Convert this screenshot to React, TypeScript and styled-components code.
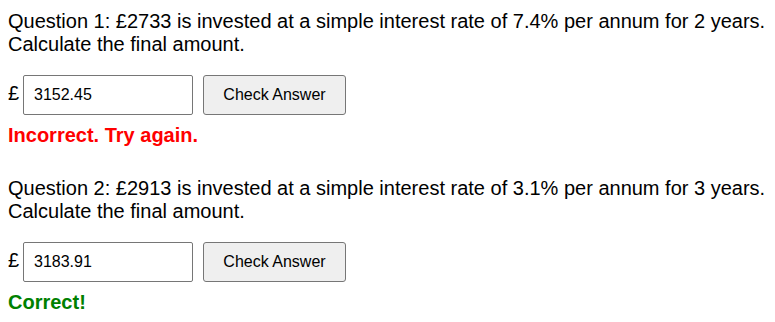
import styled, { createGlobalStyle } from "styled-components";

interface Question {
  id: number;
  principal: number;
  rate: number;
  years: number;
  answer: string;
  correct: boolean;
}

const questions: Question[] = [
  { id: 1, principal: 2733, rate: 7.4, years: 2, answer: "3152.45", correct: false },
  { id: 2, principal: 2913, rate: 3.1, years: 3, answer: "3183.91", correct: true },
];

const GlobalStyle = createGlobalStyle`
  body {
    margin: 0;
    background: #ffffff;
    font-family: "Liberation Sans", Arial, sans-serif;
    color: #000000;
  }
`;

const Page = styled.div`
  display: flex;
  flex-direction: column;
  gap: 30px;
  padding: 10px 8px 0;
`;

const Block = styled.div`
  display: flex;
  flex-direction: column;
`;

const Prompt = styled.div`
  font-size: 20px;
  line-height: 23px;
`;

const AnswerRow = styled.div`
  display: flex;
  align-items: baseline;
  margin-top: 19px;
  font-size: 20px;
`;

const Pound = styled.span`
  width: 15px;
`;

const Input = styled.input`
  box-sizing: border-box;
  width: 170px;
  height: 40px;
  padding: 10px;
  border: 1px solid #767676;
  border-radius: 2px;
  font-family: "Liberation Sans", Arial, sans-serif;
  font-size: 16px;
  color: #000000;
  background: #ffffff;
  outline: none;
`;

const CheckButton = styled.button`
  box-sizing: border-box;
  width: 143px;
  height: 40px;
  margin-left: 10px;
  padding: 0;
  border: 1px solid #767676;
  border-radius: 3px;
  background: #efefef;
  font-family: "Liberation Sans", Arial, sans-serif;
  font-size: 16px;
  color: #000000;
  cursor: pointer;
`;

const Feedback = styled.div<{ $ok: boolean }>`
  margin-top: 9px;
  font-size: 20px;
  line-height: 23px;
  font-weight: bold;
  color: ${(p) => (p.$ok ? "#008000" : "#ff0000")};
`;

export default function App() {
  return (
    <Page>
      <GlobalStyle />
      {questions.map((q) => (
        <Block key={q.id}>
          <Prompt>
            Question {q.id}: £{q.principal} is invested at a simple interest rate of {q.rate}% per annum for{" "}
            {q.years} years.
            <br />
            Calculate the final amount.
          </Prompt>
          <AnswerRow>
            <Pound>£</Pound>
            <Input type="text" defaultValue={q.answer} />
            <CheckButton>Check Answer</CheckButton>
          </AnswerRow>
          <Feedback $ok={q.correct}>{q.correct ? "Correct!" : "Incorrect. Try again."}</Feedback>
        </Block>
      ))}
    </Page>
  );
}
